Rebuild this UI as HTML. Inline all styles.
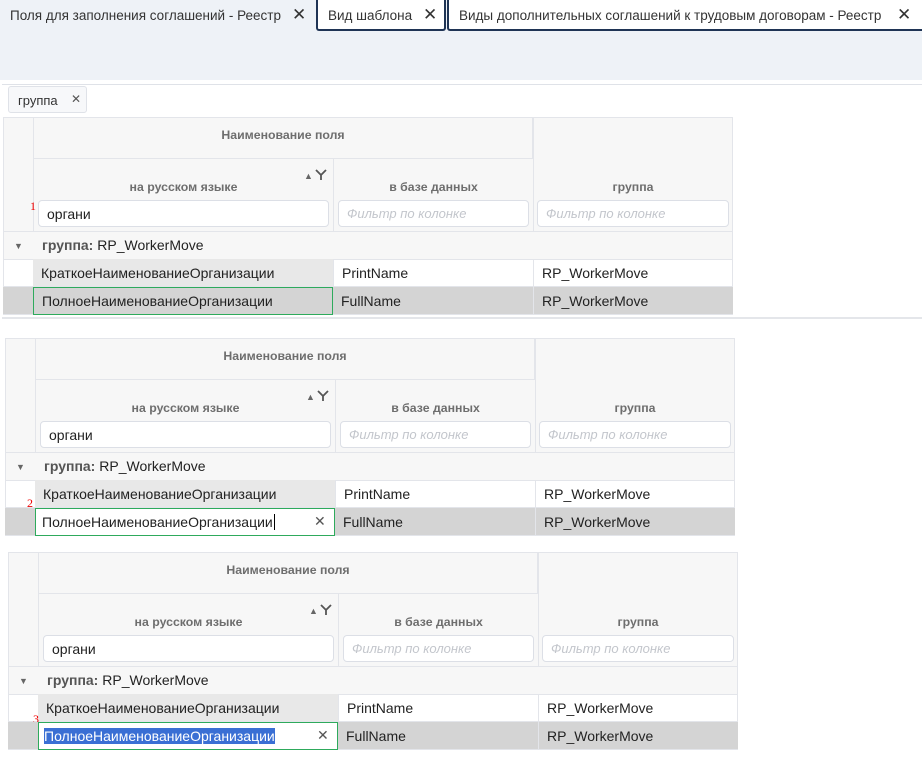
<!DOCTYPE html>
<html><head><meta charset="utf-8"><style>
*{box-sizing:border-box;margin:0;padding:0}
body{width:922px;height:759px;background:#fff;font-family:"Liberation Sans","DejaVu Sans",sans-serif;position:relative;overflow:hidden;color:#222}
.bar{position:absolute;left:0;top:0;width:922px;height:80px;background:#eef2f7}
.tab{position:absolute;top:0;height:31px;font-size:13.5px;color:#333;padding:8px 0 0 10px;white-space:nowrap}
.tab .x{position:absolute;top:5px;font-size:17px;font-weight:bold;color:#333}
.tw{background:#fff;border:2px solid #1f3455;border-top:none;border-radius:0 0 3px 3px}
.chip{position:absolute;left:8px;top:86px;width:79px;height:27px;border:1px solid #dfe2e8;border-radius:3px;background:#f7f8fa;font-size:13px;padding:6px 0 0 9px;color:#333}
.chip b{position:absolute;left:62px;top:5px;font-size:12px;color:#555}
.g{position:absolute;width:730px;height:199px;font-size:14px}
.g div{position:absolute}
.hd{background:#f7f7f7;border:1px solid #e3e5ea}
.ht{color:#6e6e6e;font-weight:bold;font-size:12.3px;text-align:center;width:100%}
.inp{background:#fff;border:1px solid #dcdfe6;border-radius:4px;height:27px;font-size:14px;padding:5px 0 0 8px}
.ph{color:#c3c6cc;font-style:italic;font-size:13px}
.c{height:28px;padding:6px 0 0 8px;border-bottom:1px solid #e3e5ea;white-space:nowrap}
.num{color:#e00;font-size:12px;font-family:"Liberation Serif",serif}
.sel{background:#3a6fd4;color:#fff}
</style></head><body>
<div class="bar"></div>
<div class="tab" style="left:0;width:315px">Поля для заполнения соглашений - Реестр<span class="x" style="left:292px">✕</span></div>
<div class="tab tw" style="left:316px;width:130px">Вид шаблона<span class="x" style="left:105px">✕</span></div>
<div class="tab tw" style="left:447px;width:480px">Виды дополнительных соглашений к трудовым договорам - Реестр<span class="x" style="left:448px">✕</span></div>
<div style="position:absolute;left:2px;top:84px;width:920px;height:1px;background:#dfe2e8"></div>
<div class="chip">группа<b>✕</b></div>

<div class="g" style="left:3px;top:117px">
 <div class="hd" style="left:0;top:0;width:31px;height:115px"></div>
 <div class="hd" style="left:30px;top:0;width:500px;height:42px"><div class="ht" style="top:10px">Наименование поля</div></div>
 <div class="hd" style="left:30px;top:41px;width:301px;height:74px"><div class="ht" style="top:21px">на русском языке</div><div style="left:270px;top:12px;font-size:9px;color:#666">▲</div><svg style="position:absolute;left:281px;top:10px" width="12" height="12" viewBox="0 0 12 12"><path d="M1 1 L6 6 L11 1 M6 6 V11" stroke="#555" stroke-width="1.8" fill="none"/></svg></div>
 <div class="hd" style="left:330px;top:41px;width:201px;height:74px"><div class="ht" style="top:21px">в базе данных</div></div>
 <div class="hd" style="left:530px;top:0;width:200px;height:115px"><div class="ht" style="top:62px">группа</div></div>
 <div class="inp" style="left:35px;top:83px;width:291px">органи</div>
 <div class="inp ph" style="left:335px;top:83px;width:191px">Фильтр по колонке</div>
 <div class="inp ph" style="left:534px;top:83px;width:192px">Фильтр по колонке</div>
 <div class="num" style="left:27px;top:82px">1</div>
 <div class="hd" style="left:0;top:114px;width:730px;height:29px"><div style="left:10px;top:9px;font-size:9px;color:#666">▼</div><div style="left:38px;top:5px;white-space:nowrap"><b style="color:#555">группа:</b> RP_WorkerMove</div></div>
 <div class="c" style="left:0;top:142px;width:30px;border-left:1px solid #e3e5ea"></div>
 <div class="c" style="left:30px;top:142px;width:300px;background:#e8e8e8">КраткоеНаименованиеОрганизации</div>
 <div class="c" style="left:330px;top:142px;width:200px;border-left:1px solid #e3e5ea">PrintName</div>
 <div class="c" style="left:530px;top:142px;width:200px;border-left:1px solid #e3e5ea;border-right:1px solid #e3e5ea">RP_WorkerMove</div>
 <div class="c" style="left:0;top:170px;width:730px;background:#d4d4d4"></div>
 <div class="c" style="left:30px;top:170px;width:300px;border:1px solid #2eaa5c;padding-top:5px">ПолноеНаименованиеОрганизации</div>
 <div class="c" style="left:330px;top:170px;width:200px;">FullName</div>
 <div class="c" style="left:530px;top:170px;width:200px;border-left:1px solid #e3e5ea">RP_WorkerMove</div>
</div>
<div style="position:absolute;left:2px;top:317px;width:920px;height:2px;background:#e4e6ea"></div>

<div class="g" style="left:5px;top:338px">
 <div class="hd" style="left:0;top:0;width:31px;height:115px"></div>
 <div class="hd" style="left:30px;top:0;width:500px;height:42px"><div class="ht" style="top:10px">Наименование поля</div></div>
 <div class="hd" style="left:30px;top:41px;width:301px;height:74px"><div class="ht" style="top:21px">на русском языке</div><div style="left:270px;top:12px;font-size:9px;color:#666">▲</div><svg style="position:absolute;left:281px;top:10px" width="12" height="12" viewBox="0 0 12 12"><path d="M1 1 L6 6 L11 1 M6 6 V11" stroke="#555" stroke-width="1.8" fill="none"/></svg></div>
 <div class="hd" style="left:330px;top:41px;width:201px;height:74px"><div class="ht" style="top:21px">в базе данных</div></div>
 <div class="hd" style="left:530px;top:0;width:200px;height:115px"><div class="ht" style="top:62px">группа</div></div>
 <div class="inp" style="left:35px;top:83px;width:291px">органи</div>
 <div class="inp ph" style="left:335px;top:83px;width:191px">Фильтр по колонке</div>
 <div class="inp ph" style="left:534px;top:83px;width:192px">Фильтр по колонке</div>
 <div class="hd" style="left:0;top:114px;width:730px;height:29px"><div style="left:10px;top:9px;font-size:9px;color:#666">▼</div><div style="left:38px;top:5px;white-space:nowrap"><b style="color:#555">группа:</b> RP_WorkerMove</div></div>
 <div class="c" style="left:0;top:142px;width:30px;border-left:1px solid #e3e5ea"></div>
 <div class="c" style="left:30px;top:142px;width:300px;background:#e8e8e8">КраткоеНаименованиеОрганизации</div>
 <div class="c" style="left:330px;top:142px;width:200px;border-left:1px solid #e3e5ea">PrintName</div>
 <div class="c" style="left:530px;top:142px;width:200px;border-left:1px solid #e3e5ea;border-right:1px solid #e3e5ea">RP_WorkerMove</div>
 <div class="num" style="left:22px;top:158px">2</div>
 <div class="c" style="left:0;top:170px;width:730px;background:#d4d4d4"></div>
 <div class="c" style="left:30px;top:170px;width:300px;border:1px solid #2eaa5c;background:#fff;padding:5px 0 0 6px">ПолноеНаименованиеОрганизации<span style="border-left:1px solid #000;margin-left:1px"></span><span style="position:absolute;left:278px;top:4px;font-size:14px;color:#555">✕</span></div>
 <div class="c" style="left:330px;top:170px;width:200px;">FullName</div>
 <div class="c" style="left:530px;top:170px;width:200px;border-left:1px solid #e3e5ea">RP_WorkerMove</div>
</div>

<div class="g" style="left:8px;top:552px">
 <div class="hd" style="left:0;top:0;width:31px;height:115px"></div>
 <div class="hd" style="left:30px;top:0;width:500px;height:42px"><div class="ht" style="top:10px">Наименование поля</div></div>
 <div class="hd" style="left:30px;top:41px;width:301px;height:74px"><div class="ht" style="top:21px">на русском языке</div><div style="left:270px;top:12px;font-size:9px;color:#666">▲</div><svg style="position:absolute;left:281px;top:10px" width="12" height="12" viewBox="0 0 12 12"><path d="M1 1 L6 6 L11 1 M6 6 V11" stroke="#555" stroke-width="1.8" fill="none"/></svg></div>
 <div class="hd" style="left:330px;top:41px;width:201px;height:74px"><div class="ht" style="top:21px">в базе данных</div></div>
 <div class="hd" style="left:530px;top:0;width:200px;height:115px"><div class="ht" style="top:62px">группа</div></div>
 <div class="inp" style="left:35px;top:83px;width:291px">органи</div>
 <div class="inp ph" style="left:335px;top:83px;width:191px">Фильтр по колонке</div>
 <div class="inp ph" style="left:534px;top:83px;width:192px">Фильтр по колонке</div>
 <div class="hd" style="left:0;top:114px;width:730px;height:29px"><div style="left:10px;top:9px;font-size:9px;color:#666">▼</div><div style="left:38px;top:5px;white-space:nowrap"><b style="color:#555">группа:</b> RP_WorkerMove</div></div>
 <div class="c" style="left:0;top:142px;width:30px;border-left:1px solid #e3e5ea"></div>
 <div class="c" style="left:30px;top:142px;width:300px;background:#e8e8e8">КраткоеНаименованиеОрганизации</div>
 <div class="c" style="left:330px;top:142px;width:200px;border-left:1px solid #e3e5ea">PrintName</div>
 <div class="c" style="left:530px;top:142px;width:200px;border-left:1px solid #e3e5ea;border-right:1px solid #e3e5ea">RP_WorkerMove</div>
 <div class="num" style="left:25px;top:160px">3</div>
 <div class="c" style="left:0;top:170px;width:730px;background:#d4d4d4"></div>
 <div class="c" style="left:30px;top:170px;width:300px;border:1px solid #2eaa5c;background:#fff;padding:5px 0 0 5px"><span class="sel">ПолноеНаименованиеОрганизации</span><span style="position:absolute;left:278px;top:4px;font-size:14px;color:#555">✕</span></div>
 <div class="c" style="left:330px;top:170px;width:200px;">FullName</div>
 <div class="c" style="left:530px;top:170px;width:200px;border-left:1px solid #e3e5ea">RP_WorkerMove</div>
</div>
</body></html>
